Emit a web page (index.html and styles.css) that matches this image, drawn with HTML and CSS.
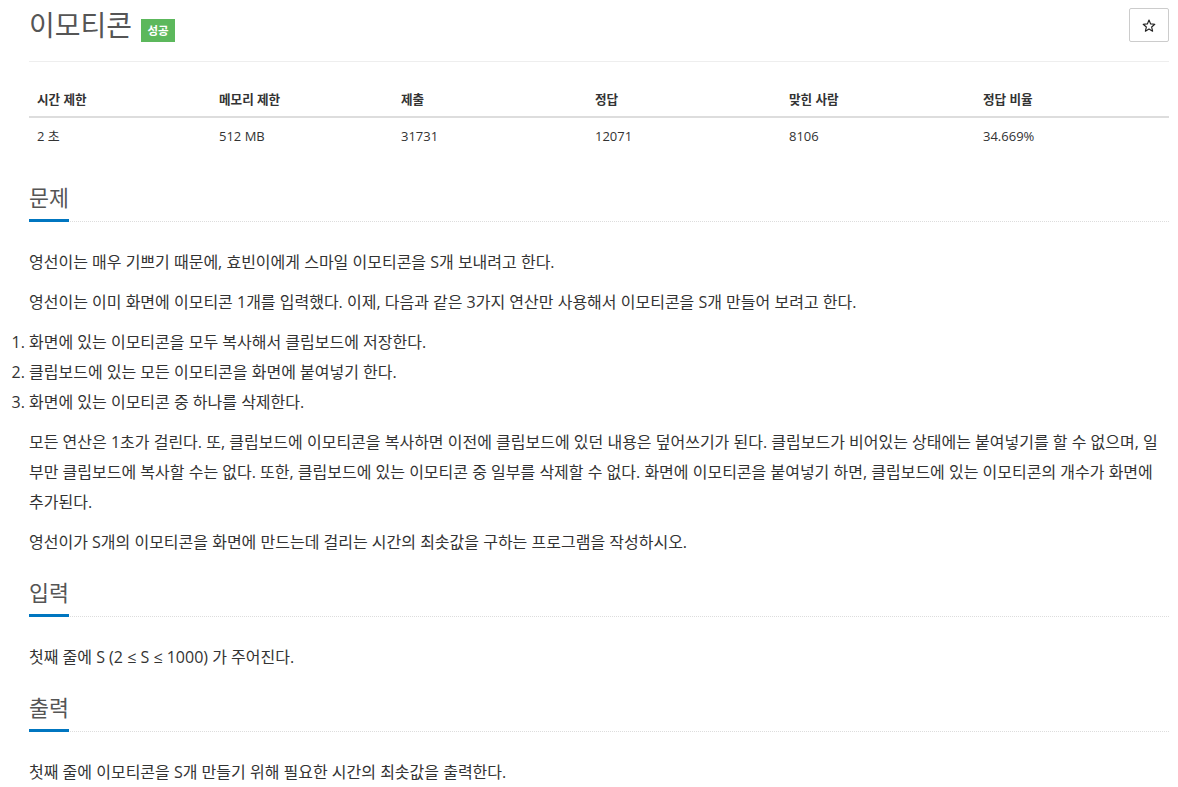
FILE: index.html
```html
<!DOCTYPE html>
<html lang="ko">
<head>
    <meta charset="UTF-8">
    <title>이모티콘</title>
    <link rel="stylesheet" href="styles.css">
</head>
<body>
    <div class="container">
        <div class="page-header">
            <h1>
                <span class="problem-title">이모티콘</span>
                <span class="label-success">성공</span>
            </h1>
            <button class="btn-star" type="button" aria-label="즐겨찾기">
                <svg width="14" height="13" viewBox="0 0 24 23">
                    <path d="M12 1.8l2.9 6.9 7.4.6-5.6 4.9 1.7 7.3L12 17.6l-6.4 3.9 1.7-7.3-5.6-4.9 7.4-.6z" fill="none" stroke="#222" stroke-width="2" stroke-linejoin="round"/>
                </svg>
            </button>
        </div>

        <table class="problem-info">
            <thead>
                <tr>
                    <th>시간 제한</th>
                    <th>메모리 제한</th>
                    <th>제출</th>
                    <th>정답</th>
                    <th>맞힌 사람</th>
                    <th>정답 비율</th>
                </tr>
            </thead>
            <tbody>
                <tr>
                    <td>2 초</td>
                    <td>512 MB</td>
                    <td>31731</td>
                    <td>12071</td>
                    <td>8106</td>
                    <td>34.669%</td>
                </tr>
            </tbody>
        </table>

        <section class="problem-section">
            <div class="headline"><h2>문제</h2></div>
            <div class="problem-text">
                <p>영선이는 매우 기쁘기 때문에, 효빈이에게 스마일 이모티콘을 S개 보내려고 한다.</p>
                <p>영선이는 이미 화면에 이모티콘 1개를 입력했다. 이제, 다음과 같은 3가지 연산만 사용해서 이모티콘을 S개 만들어 보려고 한다.</p>
                <ol>
                    <li>화면에 있는 이모티콘을 모두 복사해서 클립보드에 저장한다.</li>
                    <li>클립보드에 있는 모든 이모티콘을 화면에 붙여넣기 한다.</li>
                    <li>화면에 있는 이모티콘 중 하나를 삭제한다.</li>
                </ol>
                <p>모든 연산은 1초가 걸린다. 또, 클립보드에 이모티콘을 복사하면 이전에 클립보드에 있던 내용은 덮어쓰기가 된다. 클립보드가 비어있는 상태에는 붙여넣기를 할 수 없으며, 일부만 클립보드에 복사할 수는 없다. 또한, 클립보드에 있는 이모티콘 중 일부를 삭제할 수 없다. 화면에 이모티콘을 붙여넣기 하면, 클립보드에 있는 이모티콘의 개수가 화면에 추가된다.</p>
                <p>영선이가 S개의 이모티콘을 화면에 만드는데 걸리는 시간의 최솟값을 구하는 프로그램을 작성하시오.</p>
            </div>
        </section>

        <section class="problem-section">
            <div class="headline"><h2>입력</h2></div>
            <div class="problem-text">
                <p>첫째 줄에 S (2 ≤ S ≤ 1000) 가 주어진다.</p>
            </div>
        </section>

        <section class="problem-section">
            <div class="headline"><h2>출력</h2></div>
            <div class="problem-text">
                <p>첫째 줄에 이모티콘을 S개 만들기 위해 필요한 시간의 최솟값을 출력한다.</p>
            </div>
        </section>
    </div>
</body>
</html>
```

FILE: styles.css
```css
* {
    margin: 0;
    padding: 0;
    box-sizing: border-box;
}

body {
    font-family: "Open Sans", "Noto Sans CJK KR", sans-serif;
    color: #333;
    background: white;
}

.container {
    padding: 0 9px 0 29px;
}

.page-header {
    display: flex;
    justify-content: space-between;
    align-items: flex-start;
    padding-top: 7px;
    padding-bottom: 18px;
    border-bottom: 1px solid #eee;
    margin-bottom: 18px;
}

.page-header h1 {
    display: flex;
    align-items: center;
    font-weight: 400;
    line-height: 36px;
}

.problem-title {
    font-size: 28px;
    color: #555;
}

.label-success {
    display: inline-block;
    margin-left: 9px;
    margin-top: 10px;
    width: 34px;
    height: 23px;
    background: #5cb85c;
    color: white;
    font-size: 11.5px;
    font-weight: 700;
    line-height: 23px;
    text-align: center;
}

.btn-star {
    display: flex;
    align-items: center;
    justify-content: center;
    width: 40px;
    height: 34px;
    margin-top: 1px;
    background: white;
    border: 1px solid #ccc;
    border-radius: 2px;
}

.problem-info {
    width: 100%;
    border-collapse: collapse;
    table-layout: fixed;
    margin-bottom: 18px;
}

.problem-info th:nth-child(1),
.problem-info th:nth-child(2) {
    width: 182px;
}

.problem-info th:nth-child(3),
.problem-info th:nth-child(4),
.problem-info th:nth-child(5) {
    width: 194px;
}

.problem-info th,
.problem-info td {
    text-align: left;
    padding: 8px;
    line-height: 20px;
    font-size: 13px;
}

.problem-info th {
    font-size: 12.6px;
    font-weight: 700;
    padding-top: 10px;
    padding-bottom: 6px;
    border-bottom: 2px solid #ddd;
}

.headline {
    display: flex;
    margin: 10px 0 25px;
    border-bottom: 1px dotted #ddd;
}

.headline h2 {
    font-size: 21.7px;
    font-weight: 400;
    color: #555;
    line-height: 33px;
    padding: 9px 0 5px;
    margin-bottom: -1px;
    border-bottom: 3px solid #0076c0;
}

.problem-text {
    font-size: 16px;
    line-height: 30px;
    word-break: break-all;
}

.problem-text p {
    margin-bottom: 10px;
}

.problem-text ol {
    margin-bottom: 10px;
}
```
